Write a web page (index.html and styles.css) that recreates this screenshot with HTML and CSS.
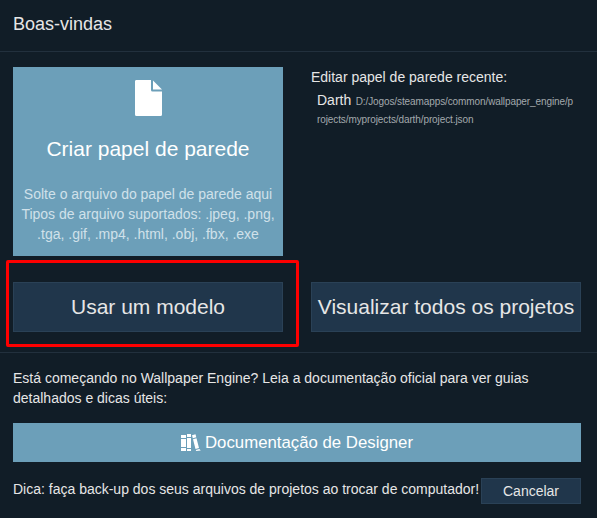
FILE: index.html
```html
<!DOCTYPE html>
<html lang="pt-BR">
<head>
    <meta charset="UTF-8">
    <meta name="viewport" content="width=device-width, initial-scale=1.0">
    <title>Boas-vindas</title>
    <link rel="stylesheet" href="styles.css">
</head>
<body>
    <div class="dialog">
        <header class="dialog-header">Boas-vindas</header>

        <section class="start">
            <div class="drop-tile">
                <svg class="file-icon" viewBox="0 0 27 36" width="27" height="36">
                    <path fill="#fff" d="M1 0H16V10a1.500 1.500 0 0 0 1.500 1.500H27V34.500a1.500 1.500 0 0 1-1.500 1.500H1.500A1.500 1.500 0 0 1 0 34.500V1.500A1.500 1.500 0 0 1 1 0Z"/>
                    <path fill="#fff" d="M18 0.500 27 9.500H18Z"/>
                </svg>
                <div class="drop-title">Criar papel de parede</div>
                <p class="drop-text">Solte o arquivo do papel de parede aqui<br>Tipos de arquivo suportados: .jpeg, .png, .tga, .gif, .mp4, .html, .obj, .fbx, .exe</p>
            </div>

            <div class="recent">
                <div class="recent-title">Editar papel de parede recente:</div>
                <div class="recent-item">
                    <span class="recent-name">Darth</span> <span class="recent-path">D:/Jogos/steamapps/common/wallpaper_engine/p</span><br>
                    <span class="recent-path">rojects/myprojects/darth/project.json</span>
                </div>
            </div>

            <div class="template-cell">
                <button class="btn btn-large">Usar um modelo</button>
                <div class="highlight"></div>
            </div>
            <button class="btn btn-large">Visualizar todos os projetos</button>
        </section>

        <section class="docs">
            <p class="docs-text">Está começando no Wallpaper Engine? Leia a documentação oficial para ver guias detalhados e dicas úteis:</p>
            <button class="docs-button">
                <svg class="books-icon" viewBox="0 0 20 17" width="20" height="17">
                    <path fill="#fff" d="M0 1H5V4H0ZM0 5H5V13H0ZM0 14H5V17H0ZM6 0H10V3H6ZM6 4H10V14H6ZM6 15H10V17H6ZM11 1.200 14.500 0.300 15.300 3.300 11.800 4.200ZM12 5.200 15.500 4.300 18 14 14.500 14.900ZM14.800 15.900 18.300 15 19.800 16.500 15.200 17Z"/>
                </svg>
                Documentação de Designer
            </button>
            <div class="docs-footer">
                <span class="tip">Dica: faça back-up dos seus arquivos de projetos ao trocar de computador!</span>
                <button class="btn btn-small">Cancelar</button>
            </div>
        </section>
    </div>
</body>
</html>
```

FILE: styles.css
```css
body {
    font-family: 'Liberation Sans', Arial, sans-serif;
    background: #111d27;
    color: #e6e6e6;
    margin: 0;
    padding: 0;
    overflow: hidden;
}

.dialog {
    width: 597px;
    height: 518px;
}

.dialog-header {
    box-sizing: border-box;
    height: 52px;
    padding: 14px 13px 0;
    font-size: 18px;
    line-height: 20px;
    border-bottom: 1px solid #22303d;
}

.start {
    display: grid;
    grid-template-columns: 270px 270px;
    grid-template-rows: 189px 50px;
    column-gap: 28px;
    row-gap: 26px;
    padding: 15px 16px 20px 13px;
    border-bottom: 1px solid #22303d;
}

.drop-tile {
    background: #6c9fb9;
    color: #fff;
    text-align: center;
    box-sizing: border-box;
    padding-top: 13px;
}

.file-icon {
    display: block;
    margin: 0 auto;
}

.drop-title {
    font-size: 21px;
    line-height: 24px;
    margin-top: 21px;
}

.drop-text {
    margin: 23px 0 0;
    font-size: 14px;
    line-height: 20px;
    color: #d0e1ea;
}

.recent {
    padding-top: 2px;
}

.recent-title {
    font-size: 14px;
    line-height: 16px;
}

.recent-item {
    margin: 7px 6px 0;
    line-height: 16px;
    white-space: nowrap;
}

.recent-name {
    font-size: 14px;
}

.recent-path {
    font-size: 10px;
    letter-spacing: -0.1px;
    color: #a3a9ad;
}

.template-cell {
    position: relative;
}

.template-cell .btn {
    width: 100%;
    height: 100%;
}

.highlight {
    position: absolute;
    left: -7px;
    top: -22px;
    width: 287px;
    height: 81px;
    border: 3px solid #fe0000;
    border-radius: 2px;
}

.btn {
    font-family: inherit;
    background: #20364b;
    border: 1px solid #2a4156;
    color: #e6e6e6;
    padding: 0;
}

.btn-large {
    font-size: 21px;
}

.btn-small {
    font-size: 14px;
    width: 100px;
    height: 26px;
}

.docs {
    padding: 15px 16px 0 13px;
}

.docs-text {
    margin: 0;
    font-size: 14px;
    line-height: 20px;
}

.docs-button {
    display: flex;
    align-items: center;
    justify-content: center;
    gap: 4px;
    width: 568px;
    height: 39px;
    margin-top: 15px;
    padding: 0;
    border: none;
    background: #6c9fb9;
    color: #fff;
    font-family: inherit;
    font-size: 16.8px;
}

.docs-footer {
    display: flex;
    align-items: center;
    margin-top: 16px;
}

.tip {
    font-size: 14px;
    flex: 1;
    white-space: nowrap;
    margin-top: -5px;
}
```
